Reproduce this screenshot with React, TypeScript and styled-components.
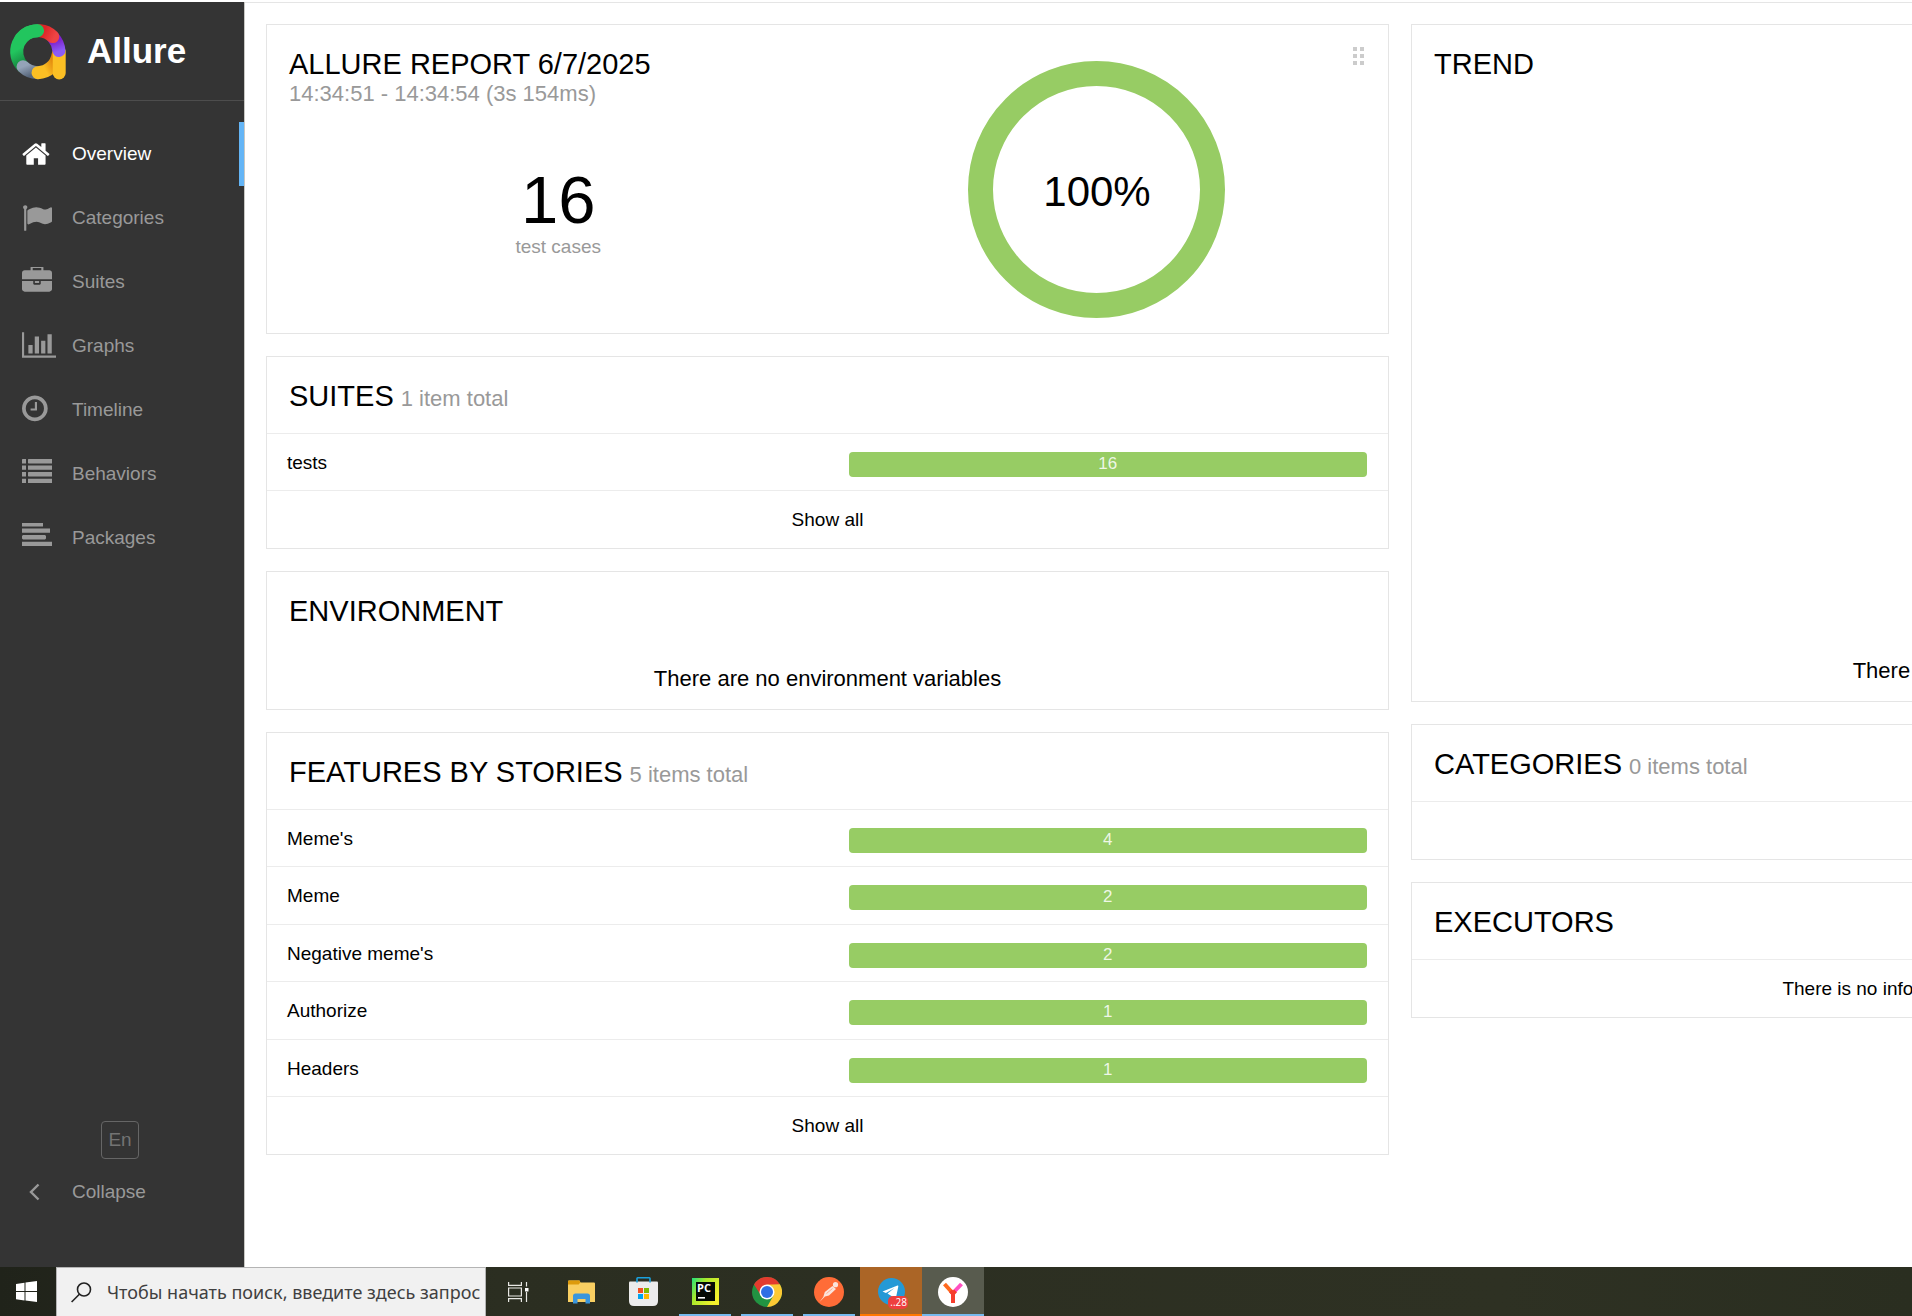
import React from "react";
import styled, { createGlobalStyle } from "styled-components";

const GlobalStyle = createGlobalStyle`
  *, *::before, *::after { box-sizing: border-box; }
  body {
    margin: 0;
    background: #fff;
    color: #000;
    font-family: "Liberation Sans", Arial, sans-serif;
    font-size: 19px;
    overflow: hidden;
  }
  a { color: inherit; text-decoration: none; }
  button { font: inherit; cursor: pointer; }
`;

const Screen = styled.div`
  display: flex;
  flex-direction: column;
  height: 100vh;
  padding-top: 2px;
`;

const Report = styled.div`
  display: flex;
  flex: 1;
  min-height: 0;
`;

/* ---------- side navigation ---------- */

const Sidebar = styled.aside`
  display: flex;
  flex-direction: column;
  flex: none;
  width: 245px;
  background: #343434;
  border-right: 1px solid #c8c8c4;
  color: #999;
`;

const Brand = styled.a`
  display: flex;
  align-items: center;
  gap: 21px;
  height: 99px;
  padding: 0 10px;
  border-bottom: 1px solid #4d4d4d;
  color: #fff;
  font-size: 35px;
  font-weight: bold;

  svg { overflow: visible; }
`;

const Nav = styled.nav`
  display: flex;
  flex-direction: column;
  flex: 1;
  padding-top: 21px;
`;

const NavLink = styled.a<{ $active?: boolean }>`
  display: flex;
  align-items: center;
  height: 64px;
  padding-left: 22px;
  color: ${(p) => (p.$active ? "#fff" : "#999")};
  border-right: 5px solid ${(p) => (p.$active ? "#64b5f6" : "transparent")};
`;

const IconSlot = styled.span`
  display: flex;
  flex: none;
  width: 50px;

  svg { display: block; fill: currentColor; }
`;

const SideFooter = styled.div`
  display: flex;
  flex-direction: column;
  align-items: flex-start;
  gap: 9px;
  padding-bottom: 51px;
`;

const LanguageButton = styled.button`
  width: 38px;
  height: 38px;
  margin-left: 101px;
  padding: 0;
  background: none;
  border: 1px solid #666;
  border-radius: 4px;
  color: #737373;
`;

const CollapseButton = styled.button`
  display: flex;
  align-items: center;
  height: 48px;
  padding: 0 0 0 22px;
  background: none;
  border: 0;
  color: #999;
`;

/* ---------- widgets ---------- */

const Content = styled.main`
  flex: 1;
  min-width: 0;
  overflow: hidden;
  padding: 21px;
  border-top: 1px solid #e5e5e5;
`;

const Columns = styled.div`
  display: grid;
  grid-template-columns: repeat(2, minmax(1123px, 1fr));
  gap: 22px;
`;

const Column = styled.div`
  display: flex;
  flex-direction: column;
  gap: 22px;
`;

const Card = styled.section`
  position: relative;
  border: 1px solid #e5e5e5;
  background: #fff;
`;

const CardHeader = styled.header`
  display: flex;
  align-items: baseline;
  gap: 7px;
  padding: 23px 22px 20px;
`;

const Title = styled.h2`
  margin: 0;
  font-size: 29px;
  line-height: 33px;
  font-weight: normal;
  text-transform: uppercase;
`;

const Note = styled.div`
  color: #999;
  font-size: 22px;
  line-height: 26px;
`;

const Summary = styled.div`
  display: grid;
  grid-template-columns: 1fr 1fr;
  padding: 23px 22px 15px;
`;

const SummaryText = styled.div`
  display: flex;
  flex-direction: column;
`;

const Stat = styled.div`
  display: flex;
  flex: 1;
  flex-direction: column;
  align-items: center;
  justify-content: center;
`;

const StatValue = styled.div`
  font-size: 67px;
  line-height: 67px;
`;

const StatLabel = styled.div`
  color: #999;
  line-height: 27px;
`;

const ChartCell = styled.div`
  display: flex;
  justify-content: center;
  padding-top: 13px;
`;

const Grip = styled.div`
  position: absolute;
  top: 22px;
  right: 24px;
  display: grid;
  grid-template-columns: 4px 4px;
  gap: 3px;

  span { height: 4px; background: #ccc; }
`;

const Row = styled.a`
  display: grid;
  grid-template-columns: 1fr 48%;
  align-items: center;
  height: 57px;
  padding: 1px 21px 0 20px;
  border-top: 1px solid #ececec;

  &:nth-child(even) { height: 58px; }
`;

const Bar = styled.span`
  height: 25px;
  margin-top: 3px;
  border-radius: 4px;
  background: #97cc64;
  color: rgba(255, 255, 255, 0.85);
  font-size: 17px;
  line-height: 23px;
  text-align: center;
`;

const CenterRow = styled.div`
  display: flex;
  align-items: center;
  justify-content: center;
  height: 58px;
  border-top: 1px solid #ececec;
`;

const EmptyBody = styled.div<{ $minHeight?: number }>`
  display: flex;
  align-items: flex-end;
  justify-content: center;
  min-height: ${(p) => p.$minHeight ?? 0}px;
  padding: 18px 22px 17px;
  font-size: 22px;
  line-height: 26px;
`;

/* ---------- taskbar ---------- */

const Taskbar = styled.footer`
  display: flex;
  flex: none;
  height: 49px;
  background: linear-gradient(90deg, #20231a 0, #2b2e21 500px, #2e3123 1500px, #2a2e20 100%);
`;

const StartButton = styled.button`
  display: flex;
  align-items: center;
  justify-content: center;
  width: 56px;
  padding: 0 4px 0 0;
  background: none;
  border: 0;
`;

const SearchBox = styled.label`
  display: flex;
  align-items: center;
  gap: 15px;
  width: 430px;
  padding-left: 14px;
  background: #f1f1f1;
  border: 1px solid #b4b4b4;
  border-bottom: 0;

  svg { flex: none; }
`;

const SearchInput = styled.input`
  flex: 1;
  min-width: 0;
  padding: 0;
  background: none;
  border: 0;
  outline: 0;
  font-family: "Noto Sans", "Open Sans", sans-serif;
  font-size: 18px;

  &::placeholder { color: #404040; opacity: 1; }
`;

const Apps = styled.div`
  display: flex;
  padding-left: 2px;
`;

const AppButton = styled.button<{ $line?: string; $fill?: string }>`
  position: relative;
  display: flex;
  align-items: center;
  justify-content: center;
  width: 62px;
  padding: 0;
  border: 0;
  background: ${(p) => p.$fill ?? "none"};

  &::after {
    content: "";
    position: absolute;
    right: ${(p) => (p.$fill ? 0 : 5)}px;
    bottom: 0;
    left: ${(p) => (p.$fill ? 0 : 5)}px;
    height: 2px;
    background: ${(p) => p.$line ?? "transparent"};
  }
`;

const Badge = styled.span`
  position: absolute;
  right: 14px;
  bottom: 7px;
  padding: 0 1px 0 2px;
  border-radius: 5px;
  background: #ee3f3f;
  color: #fff;
  font-family: "Open Sans", sans-serif;
  font-size: 10px;
  line-height: 13px;
`;

/* ---------- drawings ---------- */

const AllureLogo = () => (
  <svg width="56" height="56" viewBox="0 -1 56 56" fill="none" strokeWidth="13" strokeLinecap="round" aria-hidden="true">
    <defs>
      <linearGradient id="lg-green" x1="0" y1="0.3" x2="0.25" y2="1">
        <stop offset="0.3" stopColor="#22c55e" />
        <stop offset="1" stopColor="#15803d" />
      </linearGradient>
      <linearGradient id="lg-gray" x1="0" y1="0" x2="1" y2="1">
        <stop offset="0" stopColor="#94a3b8" />
        <stop offset="1" stopColor="#58677c" />
      </linearGradient>
      <linearGradient id="lg-yellow" x1="27" y1="46" x2="46" y2="36" gradientUnits="userSpaceOnUse">
        <stop offset="0.35" stopColor="#fbbf24" />
        <stop offset="1" stopColor="#d97706" />
      </linearGradient>
      <linearGradient id="lg-purple" x1="44" y1="14" x2="49" y2="29" gradientUnits="userSpaceOnUse">
        <stop offset="0.2" stopColor="#7e22ce" />
        <stop offset="0.9" stopColor="#8b5cf6" />
      </linearGradient>
      <linearGradient id="lg-red" x1="30" y1="7" x2="44" y2="14" gradientUnits="userSpaceOnUse">
        <stop offset="0.2" stopColor="#dc2626" />
        <stop offset="1" stopColor="#ef4444" />
      </linearGradient>
    </defs>
    <path d="M13 42.7A21 21 0 0 1 28 6.7" stroke="url(#lg-green)" />
    <path d="M13 42.7A21 21 0 0 0 27.5 48.7" stroke="url(#lg-gray)" />
    <path d="M48 31A21 21 0 0 1 28 48.7" stroke="url(#lg-yellow)" />
    <path d="M49.2 28v21" stroke="#fbbf24" />
    <path d="M43.6 14A21 21 0 0 1 48.9 26.500" stroke="url(#lg-purple)" />
    <path d="M30 6.700A21 21 0 0 1 42.800 12.600" stroke="url(#lg-red)" />
    <path d="M11 14.600A21 21 0 0 1 27.600 6.700" stroke="#22c55e" />
  </svg>
);

const FaIcon = ({ box, d, width = 30 }: { box: string; d: string; width?: number }) => (
  <svg width={width} height="30" viewBox={box} aria-hidden="true">
    <path d={d} />
  </svg>
);

const navItems = [
  {
    label: "Overview",
    icon: (
      <FaIcon
        box="64 0 1792 1792"
        d="M1472 992v480q0 26-19 45t-45 19h-384v-384h-256v384h-384q-26 0-45-19t-19-45v-480q0-1 .5-3t.5-3l575-474 575 474q1 2 1 6zm223-69l-62 74q-8 9-21 11h-3q-13 0-21-7l-692-577-692 577q-12 8-24 7-13-2-21-11l-62-74q-8-10-7-23.5t11-21.5l719-599q32-26 76-26t76 26l244 204v-195q0-14 9-23t23-9h192q14 0 23 9t9 23v408l219 182q10 8 11 21.5t-7 23.5z"
      />
    ),
  },
  {
    label: "Categories",
    icon: (
      <FaIcon
        box="0 0 1792 1792"
        d="M320 256q0 72-64 110v1266q0 13-9.5 22.5t-22.5 9.5h-64q-13 0-22.5-9.5t-9.5-22.5v-1266q-64-38-64-110 0-53 37.5-90.5t90.5-37.5 90.5 37.5 37.5 90.5zm1472 64v763q0 25-12.5 38.5t-39.5 27.5q-215 116-369 116-61 0-123.5-22t-108.5-48-115.5-48-142.5-22q-192 0-464 146-17 9-33 9-26 0-45-19t-19-45v-742q0-32 31-55 21-14 79-43 236-120 421-120 107 0 200 29t219 88q38 19 88 19 54 0 117.5-21t110-47 88-47 54.5-21q26 0 45 19t19 45z"
      />
    ),
  },
  {
    label: "Suites",
    icon: (
      <FaIcon
        box="0 64 1792 1792"
        d="M640 256h512v-128h-512v128zm1152 640v480q0 66-47 113t-113 47h-1472q-66 0-113-47t-47-113v-480h672v160q0 26 19 45t45 19h320q26 0 45-19t19-45v-160h672zm-768 0v128h-256v-128h256zm768-480v384h-1792v-384q0-66 47-113t113-47h352v-160q0-40 28-68t68-28h576q40 0 68 28t28 68v160h352q66 0 113 47t47 113z"
      />
    ),
  },
  {
    label: "Graphs",
    icon: (
      <FaIcon
        box="0 64 2048 1792"
        width={34}
        d="M640 896v512h-256v-512h256zm384-512v1024h-256v-1024h256zm1024 1152v128h-2048v-1536h128v1408h1920zm-640-896v768h-256v-768h256zm384-384v1152h-256v-1152h256z"
      />
    ),
  },
  {
    label: "Timeline",
    icon: (
      <FaIcon
        box="128 96 1792 1792"
        d="M1024 544v448q0 14-9 23t-23 9h-320q-14 0-23-9t-9-23v-64q0-14 9-23t23-9h224v-352q0-14 9-23t23-9h64q14 0 23 9t9 23zm416 352q0-148-73-273t-198-198-273-73-273 73-198 198-73 273 73 273 198 198 273 73 273-73 198-198 73-273zm224 0q0 209-103 385.5t-279.5 279.5-385.5 103-385.5-103-279.5-279.5-103-385.5 103-385.5 279.5-279.5 385.5-103 385.5 103 279.5 279.5 103 385.5z"
      />
    ),
  },
  {
    label: "Behaviors",
    icon: (
      <FaIcon
        box="0 0 30 30"
        d="M.5 0h3.500v4.500H0V.5zM0 6.600h4v4.200H0zM0 13h4v4.500H0zM0 19.700h4v4.200H0zM6.500 0H30v4.500H6.500L6 4V.5zM6 6.600h24v4.200H6zM6.500 13H30v4.500H6.500L6 17v-3.500zM6 19.700h24v4.200H6z"
      />
    ),
  },
  {
    label: "Packages",
    icon: (
      <FaIcon
        box="0 1 30 30"
        d="M1 0h20v4.500H0V1zM0 6.600h28v4.200H0zM1 13h22l1 1v2.500l-1 1H1l-1-1V14zM0 19.700h30v4.200H0z"
      />
    ),
  },
];

const Donut = () => (
  <svg width="257" height="257" viewBox="0 0 257 257" role="img" aria-label="100% passed">
    <circle cx="128.500" cy="128.500" r="116" fill="none" stroke="#97cc64" strokeWidth="25" />
    <text x="129" y="145" textAnchor="middle" fontSize="42">100%</text>
  </svg>
);

const WindowsIcon = () => (
  <svg width="21" height="21" viewBox="0 0 21 21" fill="#fff" aria-hidden="true">
    <path d="M0 3l8.500-1.300v8.400H0zM9.500 1.500L21 0v10.100H9.500zM0 11h8.500v8.400L0 18.200zM9.500 11H21v10L9.500 19.500z" />
  </svg>
);

const SearchIcon = () => (
  <svg width="21" height="21" viewBox="0 0 21 21" fill="none" stroke="#222" strokeWidth="1.600" aria-hidden="true">
    <circle cx="13" cy="7.500" r="6.500" />
    <path d="M8.400 12.200L.6 20" />
  </svg>
);

const TaskViewIcon = () => (
  <svg width="22" height="20" viewBox="0 0 22 20" fill="none" stroke="#e8e8e4" strokeWidth="1.200" aria-hidden="true">
    <path d="M.6 0v3.400h12.800V0M.6 20v-3.400h12.800V20M.6 6h12.800v8H.6zM18.500 0v4.500M18.500 10v10" />
    <path d="M17 6h3.500v3.500H17z" fill="#fff" stroke="none" />
  </svg>
);

const FolderIcon = () => (
  <svg width="27" height="24" viewBox="0 0 27 24" aria-hidden="true">
    <path d="M0 1.500Q0 .5 1 .5h10.500l1 2H26q1 0 1 1V22H0z" fill="#f9cf62" />
    <path d="M0 1.500Q0 .5 1 .5h10.500l.8 2-1.600 2H0z" fill="#dd9b0c" />
    <path d="M5 23.500V16q0-2.500 2.500-2.500h12Q22 13.500 22 16v7.500h-4.500V19h-8v4.500z" fill="#3a96dd" />
  </svg>
);

const StoreIcon = () => (
  <svg width="29" height="29" viewBox="0 0 29 29" aria-hidden="true">
    <path d="M0 5.500Q0 4.500 1 4.500h27q1 0 1 1V24q0 5-5 5H5q-5 0-5-5z" fill="#ececec" />
    <path d="M8 5.500v-4Q8 .8 8.700.8h11.600q.7 0 .7.7v4" fill="none" stroke="#1ba1dd" strokeWidth="1.600" />
    <path d="M9 11h5v5H9z" fill="#f25022" />
    <path d="M15 11h5v5h-5z" fill="#7fba00" />
    <path d="M9 17h5v5H9z" fill="#00a4ef" />
    <path d="M15 17h5v5h-5z" fill="#ffb900" />
  </svg>
);

const PyCharmIcon = () => (
  <svg width="27" height="27" viewBox="0 0 27 27" aria-hidden="true">
    <defs>
      <linearGradient id="pc" x1="0" y1="0" x2="1" y2="0.6">
        <stop offset="0" stopColor="#21e27c" />
        <stop offset="0.4" stopColor="#a8e82c" />
        <stop offset="1" stopColor="#f5f02c" />
      </linearGradient>
    </defs>
    <path d="M0 0h27v27H0z" fill="url(#pc)" />
    <path d="M4 4h19v19H4z" fill="#060a06" />
    <text x="5" y="14" fill="#fff" fontSize="11" fontWeight="bold" fontFamily="Open Sans, sans-serif">PC</text>
    <path d="M6 19h7v1.600H6z" fill="#fff" />
  </svg>
);

const ChromeIcon = () => (
  <svg width="30" height="30" viewBox="0 0 30 30" aria-hidden="true">
    <circle cx="15" cy="15" r="15" fill="#229342" />
    <path d="M2 7.500A15 15 0 0 1 28 7.500L15 8.500 9 18.500z" fill="#e33b2e" />
    <path d="M28 7.500A15 15 0 0 1 15 30L21.500 18.500 20 8z" fill="#fcc934" />
    <path d="M15 7.500h13L26 12z" fill="#fcc934" />
    <circle cx="15" cy="15" r="7.500" fill="#fff" />
    <circle cx="15" cy="15" r="6" fill="#2f6fe4" />
  </svg>
);

const PostmanIcon = () => (
  <svg width="30" height="30" viewBox="0 0 30 30" aria-hidden="true">
    <circle cx="15" cy="15" r="15" fill="#ff6c37" />
    <circle cx="21.500" cy="7.700" r="2.600" fill="#fbe3da" />
    <path d="M18.500 9l3.500 3-7 6.500-4 1-5.500 5.500 3.800-5 1.500-5z" fill="#fbe3da" />
    <path d="M12.500 16.500l6-5" stroke="#ff9a76" strokeWidth=".8" />
  </svg>
);

const TelegramIcon = () => (
  <svg width="27" height="27" viewBox="0 0 27 27" aria-hidden="true">
    <circle cx="13.500" cy="13.500" r="13.500" fill="#2499d6" />
    <path d="M4.500 13.500L19.500 7.600q1-.3.800.9L18 19.500q-.3 1.200-1.500.5L9.500 15.500l7-5.500-8.600 4.900z" fill="#fff" />
  </svg>
);

const YandexIcon = () => (
  <svg width="30" height="30" viewBox="0 0 30 30" fill="none" strokeWidth="4" aria-hidden="true">
    <circle cx="15" cy="15" r="15" fill="#fff" />
    <path d="M15 16l8.500-9" stroke="#ff4fc0" />
    <path d="M6.500 7l8.500 9.500" stroke="#ff6a1f" />
    <path d="M15 26V15" stroke="#f63d2d" />
    <path d="M12.500 13.800l2.500 2.700 2.500-2.700" stroke="#f63d2d" />
  </svg>
);

/* ---------- data ---------- */

const suites = [{ name: "tests", passed: 16 }];

const features = [
  { name: "Meme's", passed: 4 },
  { name: "Meme", passed: 2 },
  { name: "Negative meme's", passed: 2 },
  { name: "Authorize", passed: 1 },
  { name: "Headers", passed: 1 },
];

const runningLine = "#76b9ed";

const apps = [
  { name: "Task View", icon: <TaskViewIcon /> },
  { name: "File Explorer", icon: <FolderIcon /> },
  { name: "Microsoft Store", icon: <StoreIcon /> },
  { name: "PyCharm", icon: <PyCharmIcon />, line: runningLine },
  { name: "Google Chrome", icon: <ChromeIcon />, line: runningLine },
  { name: "Postman", icon: <PostmanIcon />, line: runningLine },
  { name: "Telegram", icon: <TelegramIcon />, line: "#ff7800", fill: "#ab6526", badge: "..28" },
  { name: "Yandex Browser", icon: <YandexIcon />, line: runningLine, fill: "#585b4e" },
];

type Item = { name: string; passed: number };

const ListCard = ({ title, note, items }: { title: string; note: string; items: Item[] }) => (
  <Card>
    <CardHeader>
      <Title>{title}</Title>
      <Note>{note}</Note>
    </CardHeader>
    <div>
      {items.map((item) => (
        <Row key={item.name} href="#">
          <span>{item.name}</span>
          <Bar>{item.passed}</Bar>
        </Row>
      ))}
    </div>
    <CenterRow>
      <a href="#">Show all</a>
    </CenterRow>
  </Card>
);

export default function App() {
  return (
    <Screen>
      <GlobalStyle />
      <Report>
        <Sidebar>
          <Brand href="#">
            <AllureLogo />
            <span>Allure</span>
          </Brand>
          <Nav>
            {navItems.map((item, index) => (
              <NavLink key={item.label} href="#" $active={index === 0}>
                <IconSlot>{item.icon}</IconSlot>
                {item.label}
              </NavLink>
            ))}
          </Nav>
          <SideFooter>
            <LanguageButton type="button">En</LanguageButton>
            <CollapseButton type="button">
              <IconSlot>
                <svg width="26" height="18" viewBox="0 0 26 18" aria-hidden="true">
                  <path d="M16.500 1.500L9 9l7.500 7.500" fill="none" stroke="currentColor" strokeWidth="2.400" />
                </svg>
              </IconSlot>
              Collapse
            </CollapseButton>
          </SideFooter>
        </Sidebar>

        <Content>
          <Columns>
            <Column>
              <Card>
                <Summary>
                  <SummaryText>
                    <Title>Allure Report 6/7/2025</Title>
                    <Note>14:34:51 - 14:34:54 (3s 154ms)</Note>
                    <Stat>
                      <StatValue>16</StatValue>
                      <StatLabel>test cases</StatLabel>
                    </Stat>
                  </SummaryText>
                  <ChartCell>
                    <Donut />
                  </ChartCell>
                </Summary>
                <Grip aria-hidden="true">
                  {[0, 1, 2, 3, 4, 5].map((dot) => (
                    <span key={dot} />
                  ))}
                </Grip>
              </Card>

              <ListCard title="Suites" note="1 item total" items={suites} />

              <Card>
                <CardHeader>
                  <Title>Environment</Title>
                </CardHeader>
                <EmptyBody>There are no environment variables</EmptyBody>
              </Card>

              <ListCard title="Features by stories" note="5 items total" items={features} />
            </Column>

            <Column>
              <Card>
                <CardHeader>
                  <Title>Trend</Title>
                </CardHeader>
                <EmptyBody $minHeight={600}>There is nothing to show</EmptyBody>
              </Card>
              <Card>
                <CardHeader>
                  <Title>Categories</Title>
                  <Note>0 items total</Note>
                </CardHeader>
                <CenterRow />
              </Card>
              <Card>
                <CardHeader>
                  <Title>Executors</Title>
                </CardHeader>
                <CenterRow>There is no information about tests executors</CenterRow>
              </Card>
            </Column>
          </Columns>
        </Content>
      </Report>

      <Taskbar>
        <StartButton type="button" aria-label="Start">
          <WindowsIcon />
        </StartButton>
        <SearchBox>
          <SearchIcon />
          <SearchInput type="text" aria-label="Поиск" placeholder="Чтобы начать поиск, введите здесь запрос" />
        </SearchBox>
        <Apps>
          {apps.map((app) => (
            <AppButton key={app.name} type="button" aria-label={app.name} $line={app.line} $fill={app.fill}>
              {app.icon}
              {app.badge && <Badge>{app.badge}</Badge>}
            </AppButton>
          ))}
        </Apps>
      </Taskbar>
    </Screen>
  );
}
